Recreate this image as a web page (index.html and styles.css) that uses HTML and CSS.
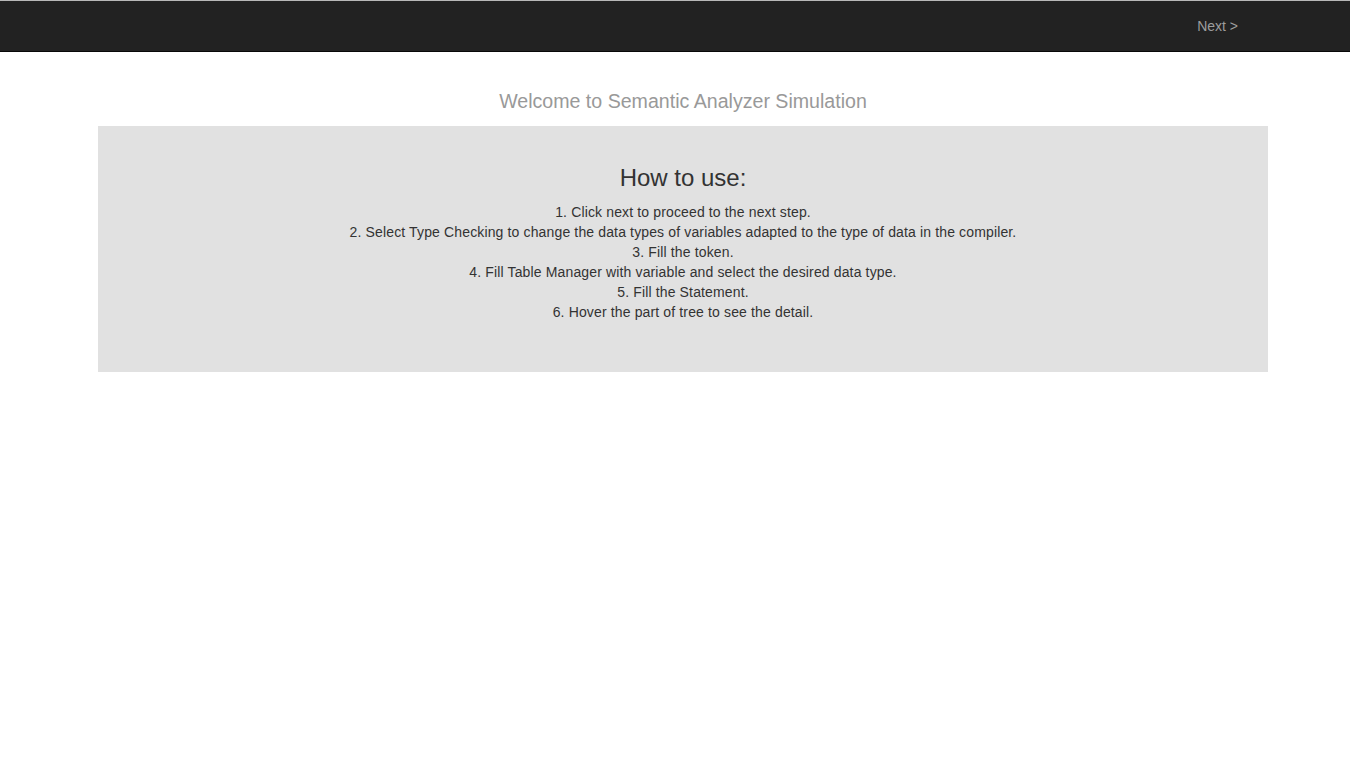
FILE: index.html
```html
<!DOCTYPE html>
<html>
<head>
<meta charset="utf-8">
<link rel="stylesheet" href="styles.css">
</head>
<body>
<nav class="navbar">
  <div class="nav-inner">
    <a class="next" href="#">Next &gt;</a>
  </div>
</nav>
<main class="container">
  <h2 class="welcome">Welcome to Semantic Analyzer Simulation</h2>
  <section class="panel">
    <h1 class="panel-title">How to use:</h1>
    <p class="step">1. Click next to proceed to the next step.</p>
    <p class="step">2. Select Type Checking to change the data types of variables adapted to the type of data in the compiler.</p>
    <p class="step">3. Fill the token.</p>
    <p class="step">4. Fill Table Manager with variable and select the desired data type.</p>
    <p class="step">5. Fill the Statement.</p>
    <p class="step">6. Hover the part of tree to see the detail.</p>
  </section>
</main>
</body>
</html>
```

FILE: styles.css
```css
html, body {
  margin: 0;
  padding: 0;
  background: #fff;
  font-family: "Liberation Sans", Arial, sans-serif;
  font-size: 14px;
  line-height: 20px;
  color: #333;
}

.navbar {
  height: 50px;
  background: #222;
  border-top: 1px solid #b8b8b8;
  border-bottom: 1px solid #080808;
}

.nav-inner {
  display: flex;
  justify-content: flex-end;
  align-items: center;
  height: 50px;
  padding-right: 112px;
}

.next {
  color: #9d9d9d;
  text-decoration: none;
  font-size: 14px;
  line-height: 20px;
}

.container {
  width: 1170px;
  margin-left: 98px;
}

.welcome {
  margin: 38px 0 14px;
  text-align: center;
  font-size: 19.6px;
  font-weight: normal;
  line-height: 22px;
  color: #999;
}

.panel {
  background: #e1e1e1;
  padding: 39px 0 50px;
  text-align: center;
}

.panel-title {
  margin: 0 0 11px;
  font-size: 24px;
  font-weight: normal;
  line-height: 26px;
  color: #333;
}

.step {
  margin: 0;
  font-size: 14px;
  line-height: 20px;
  letter-spacing: 0.14px;
  color: #333;
}
```
